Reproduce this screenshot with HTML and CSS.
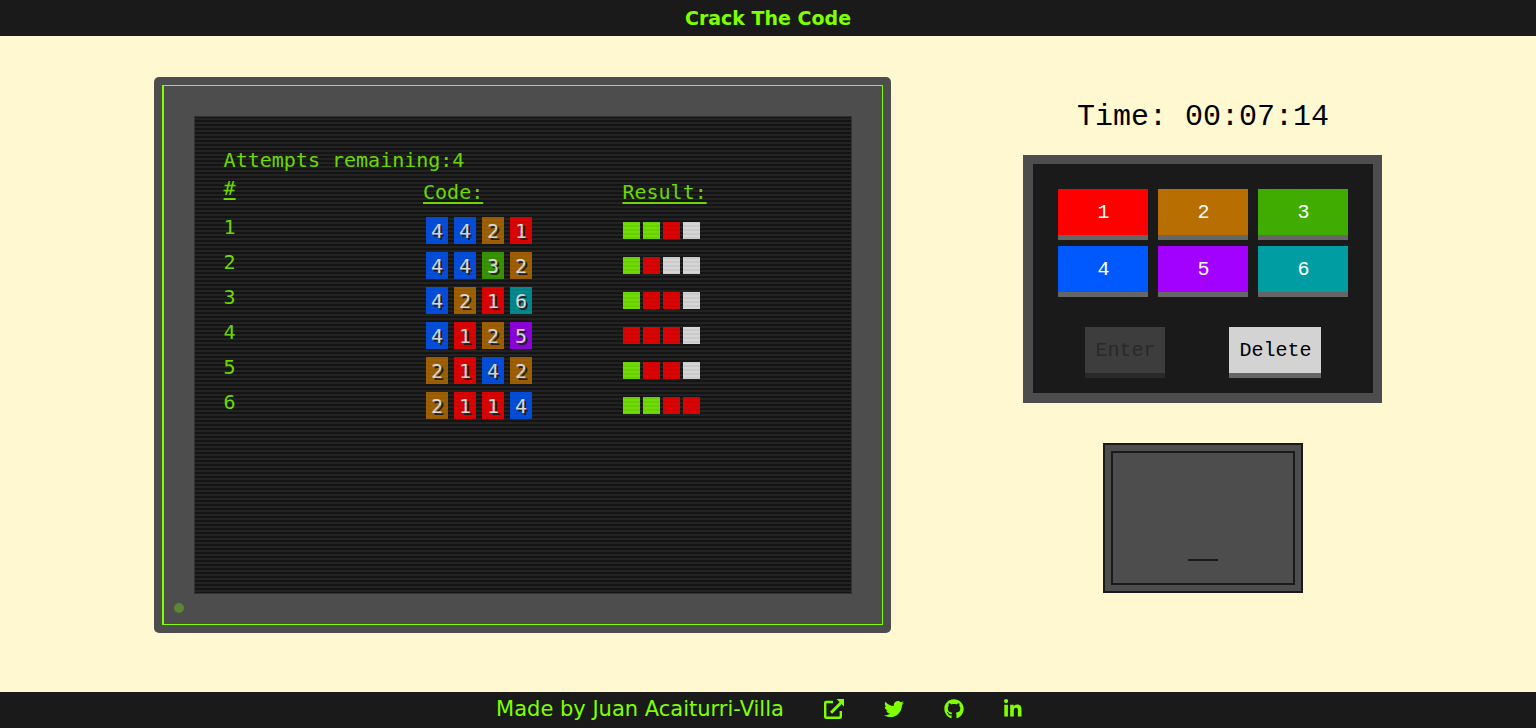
FILE: index.html
```html
<!DOCTYPE html>
<html lang="en">
<head>
<meta charset="utf-8">
<meta name="viewport" content="width=device-width, initial-scale=1">
<title>Crack The Code</title>
<link rel="stylesheet" href="styles.css">
</head>
<body>
<header class="top-bar"><h1 class="title">Crack The Code</h1></header>

<main class="game">
  <section class="monitor" aria-label="Attempts">
    <div class="bezel">
      <div class="screen">
        <p class="remaining">Attempts remaining:4</p>
        <table class="attempts">
          <thead>
            <tr><th scope="col" class="num">#</th><th scope="col">Code:</th><th scope="col">Result:</th></tr>
          </thead>
          <tbody>
            <tr><td class="num">1</td><td><div class="code"><span class="c4">4</span><span class="c4">4</span><span class="c2">2</span><span class="c1">1</span></div></td><td><div class="result"><i class="hit"></i><i class="hit"></i><i class="near"></i><i></i></div></td></tr>
            <tr><td class="num">2</td><td><div class="code"><span class="c4">4</span><span class="c4">4</span><span class="c3">3</span><span class="c2">2</span></div></td><td><div class="result"><i class="hit"></i><i class="near"></i><i></i><i></i></div></td></tr>
            <tr><td class="num">3</td><td><div class="code"><span class="c4">4</span><span class="c2">2</span><span class="c1">1</span><span class="c6">6</span></div></td><td><div class="result"><i class="hit"></i><i class="near"></i><i class="near"></i><i></i></div></td></tr>
            <tr><td class="num">4</td><td><div class="code"><span class="c4">4</span><span class="c1">1</span><span class="c2">2</span><span class="c5">5</span></div></td><td><div class="result"><i class="near"></i><i class="near"></i><i class="near"></i><i></i></div></td></tr>
            <tr><td class="num">5</td><td><div class="code"><span class="c2">2</span><span class="c1">1</span><span class="c4">4</span><span class="c2">2</span></div></td><td><div class="result"><i class="hit"></i><i class="near"></i><i class="near"></i><i></i></div></td></tr>
            <tr><td class="num">6</td><td><div class="code"><span class="c2">2</span><span class="c1">1</span><span class="c1">1</span><span class="c4">4</span></div></td><td><div class="result"><i class="hit"></i><i class="hit"></i><i class="near"></i><i class="near"></i></div></td></tr>
          </tbody>
        </table>
      </div>
      <span class="power-light"></span>
    </div>
  </section>

  <section class="controls" aria-label="Controls">
    <p class="timer">Time: 00:07:14</p>
    <div class="keypad">
      <div class="keys">
        <button type="button" class="key c1">1</button>
        <button type="button" class="key c2">2</button>
        <button type="button" class="key c3">3</button>
        <button type="button" class="key c4">4</button>
        <button type="button" class="key c5">5</button>
        <button type="button" class="key c6">6</button>
      </div>
      <div class="actions">
        <button type="button" class="key action" disabled>Enter</button>
        <button type="button" class="key action">Delete</button>
      </div>
    </div>
    <div class="display"><div class="display-inner"><span class="cursor"></span></div></div>
  </section>
</main>

<footer class="bottom-bar">
  <span class="credit">Made by Juan Acaiturri-Villa</span>
  <a class="icon-link" href="#" aria-label="Portfolio"><svg viewBox="0 0 20 20"><path d="M9 3H2.200Q1.200 3 1.200 4V17.800Q1.200 18.800 2.200 18.800H15.800Q16.800 18.800 16.800 17.800V12" fill="none" stroke="currentColor" stroke-width="2.400"/><path d="M7 13.700L17 3.700" fill="none" stroke="currentColor" stroke-width="3"/><path d="M12.500 0H20V7.500Z" fill="currentColor"/></svg></a>
  <a class="icon-link" href="#" aria-label="Twitter"><svg viewBox="0 0 512 512"><path fill="currentColor" d="M459.370 151.716c.325 4.548.325 9.097.325 13.645 0 138.720-105.583 298.558-298.558 298.558-59.452 0-114.680-17.219-161.137-47.106 8.447.974 16.568 1.299 25.340 1.299 49.055 0 94.213-16.568 130.274-44.832-46.132-.975-84.792-31.188-98.112-72.772 6.498.974 12.995 1.624 19.818 1.624 9.421 0 18.843-1.300 27.614-3.573-48.081-9.747-84.143-51.980-84.143-102.985v-1.299c13.969 7.797 30.214 12.670 47.431 13.319-28.264-18.843-46.781-51.005-46.781-87.391 0-19.492 5.197-37.360 14.294-52.954 51.655 63.675 129.300 105.258 216.365 109.807-1.624-7.797-2.599-15.918-2.599-24.040 0-57.828 46.782-104.934 104.934-104.934 30.213 0 57.502 12.670 76.670 33.137 23.715-4.548 46.456-13.320 66.599-25.340-7.798 24.366-24.366 44.833-46.132 57.827 21.117-2.273 41.584-8.122 60.426-16.243-14.292 20.791-32.161 39.308-52.628 54.253z"/></svg></a>
  <a class="icon-link" href="#" aria-label="GitHub"><svg viewBox="0 0 496 512"><path fill="currentColor" d="M165.900 397.400c0 2-2.300 3.600-5.200 3.600-3.300.3-5.600-1.300-5.600-3.600 0-2 2.300-3.600 5.200-3.600 3-.3 5.600 1.300 5.600 3.600zM134.800 392.900c-.7 2 1.300 4.300 4.300 4.900 2.600 1 5.600 0 6.200-2s-1.300-4.300-4.300-5.200c-2.600-.7-5.500.3-6.200 2.300zM179 391.200c-2.900.7-4.900 2.600-4.600 4.900.3 2 2.900 3.300 5.900 2.600 2.900-.7 4.900-2.600 4.600-4.600-.3-1.900-3-3.200-5.900-2.900zM244.800 8C106.100 8 0 113.300 0 252c0 110.900 69.800 205.800 169.500 239.200 12.800 2.300 17.300-5.600 17.300-12.100 0-6.200-.3-40.400-.3-61.400 0 0-70 15-84.700-29.800 0 0-11.400-29.100-27.800-36.600 0 0-22.900-15.700 1.600-15.400 0 0 24.900 2 38.600 25.800 21.900 38.600 58.600 27.500 72.900 20.900 2.300-16 8.800-27.100 16-33.700-55.900-6.200-112.300-14.300-112.300-110.500 0-27.500 7.600-41.300 23.600-58.900-2.600-6.500-11.100-33.300 2.600-67.900 20.900-6.500 69 27 69 27 20-5.600 41.500-8.500 62.800-8.500s42.800 2.900 62.800 8.500c0 0 48.100-33.600 69-27 13.700 34.700 5.200 61.400 2.600 67.900 16 17.700 25.800 31.500 25.800 58.900 0 96.500-58.900 104.200-114.800 110.500 9.200 7.900 17 22.900 17 46.400 0 33.700-.3 75.400-.3 83.600 0 6.500 4.600 14.400 17.300 12.100C428.200 457.800 496 362.900 496 252 496 113.300 383.500 8 244.800 8z"/></svg></a>
  <a class="icon-link" href="#" aria-label="LinkedIn"><svg viewBox="0 0 448 512" preserveAspectRatio="xMinYMid meet"><path fill="currentColor" d="M100.280 448H7.400V148.900h92.880zM53.790 108.100C24.090 108.100 0 83.500 0 53.800a53.790 53.790 0 0 1 107.580 0c0 29.700-24.100 54.300-53.790 54.300zM447.900 448h-92.680V302.400c0-34.700-.7-79.200-48.290-79.200-48.290 0-55.690 37.700-55.690 76.700V448h-92.780V148.900h89.080v40.800h1.300c12.400-23.500 42.690-48.300 87.880-48.300 94 0 111.280 61.900 111.280 142.300V448z"/></svg></a>
</footer>
</body>
</html>
```
FILE: styles.css
```css
* { box-sizing: border-box; }

body {
  margin: 0;
  min-height: 100vh;
  display: flex;
  flex-direction: column;
  background: #fff8d0;
  color: #000;
  font-family: "Liberation Mono", monospace;
  font-size: 20px;
}

p, h1 { margin: 0; }

.top-bar,
.bottom-bar {
  display: flex;
  align-items: center;
  justify-content: center;
  min-height: 36px;
  background: #1a1a1a;
  color: #7fff00;
  font-family: "DejaVu Sans", sans-serif;
}

.title { font-size: 19px; line-height: 24px; }

.bottom-bar { gap: 40px; padding: 0 16px 2px 0; }
.credit { font-size: 21px; line-height: 24px; }
.icon-link { display: flex; width: 20px; height: 20px; color: #7fff00; }
.icon-link svg { width: 100%; height: 100%; }

.game {
  flex: 1;
  display: flex;
  justify-content: space-between;
  padding: 41px 10% 59px;
}

.monitor {
  display: flex;
  width: 60%;
  padding: 8px;
  border-radius: 5px;
  background: #4d4d4d;
}

.bezel {
  position: relative;
  flex: 1;
  display: flex;
  padding: 30px;
  border: 1px solid #7fff00;
  border-left-width: 2px;
}

.screen {
  position: relative;
  flex: 1;
  padding: 30px;
  background: repeating-linear-gradient(#151515 0 2px, #262626 2px 4px);
  color: #7fff00;
  font-family: "DejaVu Sans Mono", monospace;
  line-height: 28px;
}

/* Scan lines over everything on the screen */
.screen::after {
  content: "";
  position: absolute;
  inset: 0;
  pointer-events: none;
  border: 1px solid #333;
  background: repeating-linear-gradient(rgba(18, 18, 18, 0.2) 0 2px, rgba(18, 18, 18, 0.15) 2px 4px);
}

.power-light {
  position: absolute;
  left: 10px;
  bottom: 11px;
  width: 10px;
  height: 10px;
  border-radius: 50%;
  background: #5c8536;
}

.attempts {
  width: 100%;
  table-layout: fixed;
  border-collapse: collapse;
}

.attempts th,
.attempts td { padding: 4px 0; text-align: left; vertical-align: top; }
.attempts th { height: 39px; font-weight: 400; text-decoration: underline; text-underline-offset: 3px; }
.attempts td { height: 35px; }
.attempts .num { padding-top: 0; }

.code { display: flex; gap: 6px; padding-left: 3px; }
.code span {
  width: 22px;
  height: 27px;
  color: #fff;
  text-align: center;
  text-shadow: 2px 2px #222;
}

.result { display: flex; gap: 3px; padding: 5px 1px; }
.result i { width: 17px; height: 17px; background: #f8f8f8; }
.result .hit { background: #7fff00; }
.result .near { background: #f00; }

.c1 { background: #f00; }
.c2 { background: #b86e00; }
.c3 { background: #40ab00; }
.c4 { background: #0059ff; }
.c5 { background: #a200ff; }
.c6 { background: #009ea3; }

.controls {
  display: flex;
  flex-direction: column;
  align-items: center;
  padding-top: 20px;
}

.timer { margin-bottom: 18px; font-size: 30px; line-height: 40px; }

.keypad {
  padding: 25px 25px 15px;
  border: solid #4d4d4d;
  border-width: 9px 9px 10px 10px;
  background: #1a1a1a;
}

.keys {
  display: grid;
  grid-template-columns: repeat(3, 90px);
  gap: 6px 10px;
}

.key {
  height: 51px;
  padding: 0 10px;
  border: 0;
  border-bottom: 5px solid #666;
  color: #fff;
  font: inherit;
}

.actions {
  display: flex;
  justify-content: space-between;
  padding: 30px 27px 0;
}

.action { background: #d3d3d3; color: #000; }
.action:disabled { background: #3d3d3d; border-color: #292929; color: #292929; }

.display {
  display: flex;
  width: 200px;
  height: 150px;
  margin-top: 40px;
  padding: 6px;
  border: 2px solid #1a1a1a;
  background: #4d4d4d;
}

.display-inner {
  flex: 1;
  display: flex;
  align-items: flex-end;
  justify-content: center;
  padding-bottom: 22px;
  border: 2px solid #1a1a1a;
}

.cursor { width: 30px; height: 2px; background: #1a1a1a; }
```
